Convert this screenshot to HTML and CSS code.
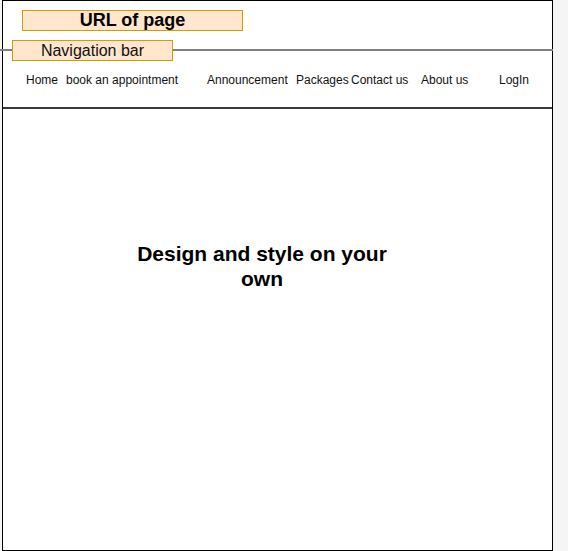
FILE: index.html
```html
<!DOCTYPE html>
<html>
<head>
<meta charset="utf-8">
<link rel="stylesheet" href="styles.css">
</head>
<body>
<div class="frame">
  <div class="urlbar">
    <div class="label label-url">URL of page</div>
  </div>
  <div class="rule"></div>
  <div class="label label-nav">Navigation bar</div>
  <nav class="nav">
    <span>Home</span>
    <span>book an appointment</span>
    <span>Announcement</span>
    <span>Packages</span>
    <span>Contact us</span>
    <span>About us</span>
    <span>LogIn</span>
  </nav>
  <main class="main">
    <div class="headline">Design and style on your own</div>
  </main>
</div>
</body>
</html>
```
FILE: styles.css
```css
html, body {
  margin: 0;
  padding: 0;
  background: #f5f5f5;
  font-family: "Liberation Sans", Arial, sans-serif;
  color: #000;
}
.frame {
  position: relative;
  box-sizing: border-box;
  margin-left: 2px;
  width: 551px;
  height: 551px;
  background: #fff;
  border: 1px solid #000;
  display: flex;
  flex-direction: column;
}
.urlbar {
  height: 48px;
  box-sizing: border-box;
  padding: 9px 0 0 19px;
}
.label {
  box-sizing: border-box;
  background: #ffe6cc;
  border: 1px solid #d79b00;
  display: flex;
  align-items: center;
  justify-content: center;
  height: 21px;
}
.label-url {
  width: 221px;
  font-size: 18px;
  font-weight: bold;
}
.label-nav {
  position: absolute;
  left: 9px;
  top: 39px;
  width: 161px;
  font-size: 16px;
  color: #111;
}
.rule {
  height: 2px;
  background: #808080;
  margin-left: -3px;
  margin-right: -1px;
}
.nav {
  height: 58px;
  box-sizing: border-box;
  border-bottom: 2px solid #3a3a3a;
  display: grid;
  grid-template-columns: 40px 141px 89px 55px 70px 78px auto;
  align-items: center;
  padding-left: 23px;
  padding-top: 1px;
  font-size: 12px;
  color: #111;
}
.main {
  flex: 1;
  padding: 132px 0 0 124px;
}
.headline {
  width: 270px;
  text-align: center;
  font-size: 21px;
  font-weight: bold;
  line-height: 25px;
}
```
